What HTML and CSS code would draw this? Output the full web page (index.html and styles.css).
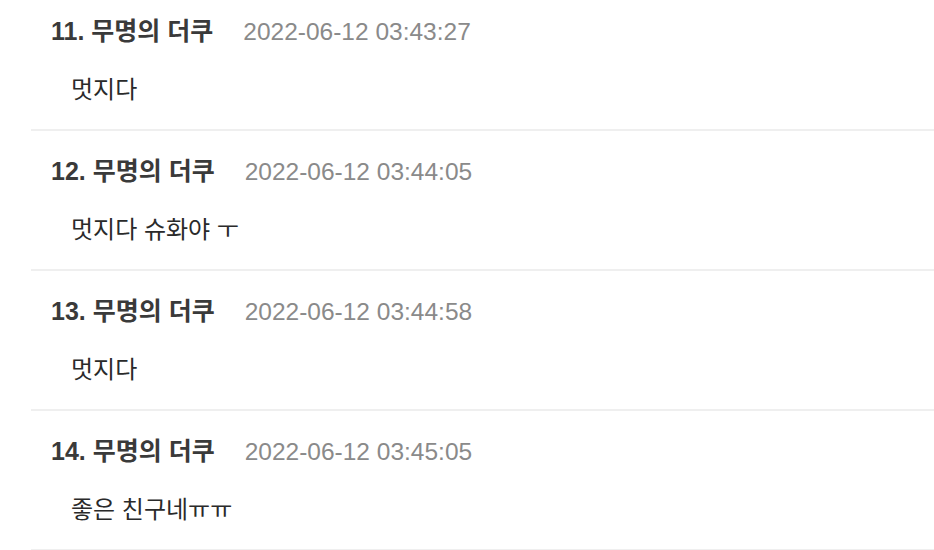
FILE: index.html
```html
<!DOCTYPE html>
<html lang="ko">
<head>
<meta charset="utf-8">
<title>댓글</title>
<link rel="stylesheet" href="styles.css">
</head>
<body>
<ul class="comments">
  <li class="comment">
    <div class="comment-head"><span class="comment-author">11. 무명의 더쿠</span><span class="comment-date">2022-06-12 03:43:27</span></div>
    <p class="comment-body">멋지다</p>
  </li>
  <li class="comment">
    <div class="comment-head"><span class="comment-author">12. 무명의 더쿠</span><span class="comment-date">2022-06-12 03:44:05</span></div>
    <p class="comment-body">멋지다 슈화야 ㅜ</p>
  </li>
  <li class="comment">
    <div class="comment-head"><span class="comment-author">13. 무명의 더쿠</span><span class="comment-date">2022-06-12 03:44:58</span></div>
    <p class="comment-body">멋지다</p>
  </li>
  <li class="comment">
    <div class="comment-head"><span class="comment-author">14. 무명의 더쿠</span><span class="comment-date">2022-06-12 03:45:05</span></div>
    <p class="comment-body">좋은 친구네ㅠㅠ</p>
  </li>
</ul>
</body>
</html>
```
FILE: styles.css
```css
html, body {
  margin: 0;
  padding: 0;
  background: #ffffff;
}

body {
  font-family: "Liberation Sans", "Noto Sans CJK KR", sans-serif;
  overflow: hidden;
}

.comments {
  list-style: none;
  margin: -9px 0 0 31px;
  padding: 0;
}

.comment {
  height: 140px;
  padding: 20px 0 0;
  box-sizing: border-box;
  border-bottom: 2px solid #efefef;
}

.comment-head {
  height: 40px;
  padding-left: 20px;
  line-height: 40px;
  font-size: 25px;
  white-space: nowrap;
}

.comment-author {
  font-weight: 700;
  color: #3a3a3a;
}

.comment-date {
  margin-left: 30px;
  font-size: 24.5px;
  color: #8a8a8a;
}

.comment-body {
  height: 32px;
  margin: 23px 0 0;
  padding-left: 40px;
  font-size: 24px;
  line-height: 32px;
  color: #2a2a2a;
  white-space: nowrap;
}
```
